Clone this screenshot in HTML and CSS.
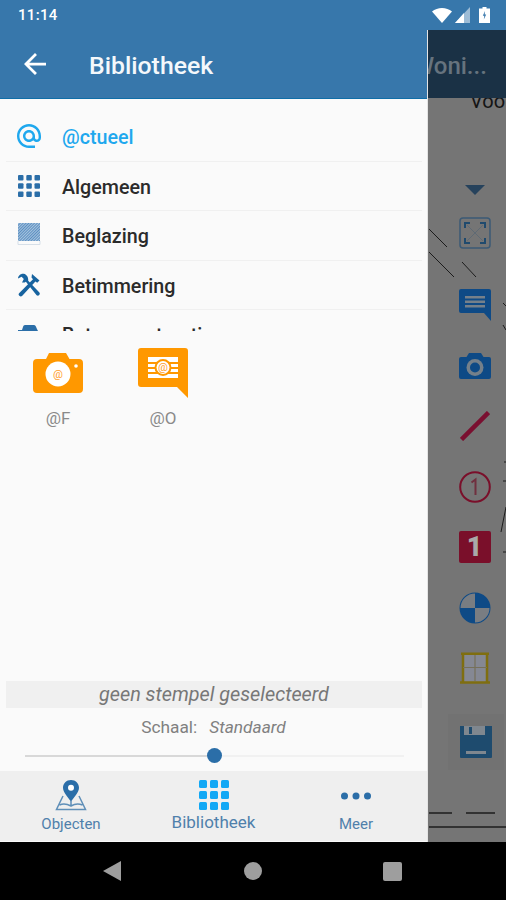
FILE: index.html
```html
<!DOCTYPE html>
<html lang="en">
<head>
  <meta charset="UTF-8" />
  <meta name="viewport" content="width=device-width, initial-scale=1.0" />
  <title>Bibliotheek</title>
  <link rel="stylesheet" href="styles.css">
</head>
<body>
  <div class="screen">
    <!-- Status bar -->
    <header class="status-bar">
      <span class="status-time">11:14</span>
      <div class="status-icons">
        <svg width="20" height="15" viewBox="0 0 20 15"><path d="M0 3.500C2.800 1.200 6.200 0 10 0s7.200 1.200 10 3.500L10 15z" fill="#fff"/></svg>
        <svg width="15" height="16" viewBox="0 0 15 16"><path d="M15 0v16H0z" fill="#9dbcd6"/><path d="M9 6v10H0z" fill="#fff"/></svg>
        <svg width="11" height="16" viewBox="0 0 11 16"><path d="M3.500 0h4v1.500H11V16H0V1.500h3.500z" fill="#fff"/><path d="M6 4 3.800 8.800H5.300L4.800 12.500 7.200 7.500H5.700z" fill="#3777ab"/></svg>
      </div>
    </header>

    <div class="content">
      <!-- Drawer -->
      <aside class="drawer">
        <div class="drawer-head">
          <svg class="back-icon" width="22" height="22" viewBox="4 4 16 16"><path d="M20 11H7.830l5.590-5.590L12 4l-8 8 8 8 1.410-1.410L7.830 13H20z" fill="#fff"/></svg>
          <h1>Bibliotheek</h1>
        </div>

        <ul class="lib-list">
          <li class="lib-row active">
            <svg width="24" height="24" viewBox="2 2 20 20"><path fill="#1fa8ee" d="M12 2C6.480 2 2 6.480 2 12s4.480 10 10 10h5v-2h-5c-4.340 0-8-3.660-8-8s3.660-8 8-8 8 3.660 8 8v1.430c0 .79-.71 1.570-1.500 1.570s-1.500-.78-1.500-1.570V12c0-2.760-2.240-5-5-5s-5 2.240-5 5 2.240 5 5 5c1.380 0 2.640-.56 3.540-1.470.65.89 1.770 1.470 2.960 1.470 1.970 0 3.500-1.600 3.500-3.570V12c0-5.520-4.480-10-10-10zm0 13c-1.660 0-3-1.340-3-3s1.340-3 3-3 3 1.340 3 3-1.340 3-3 3z"/></svg>
            <span>@ctueel</span>
          </li>
          <li class="lib-row">
            <svg width="24" height="24" viewBox="0 0 24 24" fill="#2b6ea8">
              <rect x="1" y="1" width="5.500" height="5.500" rx="1"/><rect x="9.300" y="1" width="5.500" height="5.500" rx="1"/><rect x="17.500" y="1" width="5.500" height="5.500" rx="1"/>
              <rect x="1" y="9.300" width="5.500" height="5.500" rx="1"/><rect x="9.300" y="9.300" width="5.500" height="5.500" rx="1"/><rect x="17.500" y="9.300" width="5.500" height="5.500" rx="1"/>
              <rect x="1" y="17.500" width="5.500" height="5.500" rx="1"/><rect x="9.300" y="17.500" width="5.500" height="5.500" rx="1"/><rect x="17.500" y="17.500" width="5.500" height="5.500" rx="1"/>
            </svg>
            <span>Algemeen</span>
          </li>
          <li class="lib-row">
            <svg width="24" height="24" viewBox="0 0 24 24">
              <defs><pattern id="hatch" width="2" height="2" patternUnits="userSpaceOnUse" patternTransform="rotate(45)"><rect width="2" height="2" fill="#a9c4de"/><rect width="1" height="2" fill="#5a8fc2"/></pattern></defs>
              <rect x="1" y="0" width="22" height="18" fill="url(#hatch)"/>
              <path d="M1 18v3.500h22V18" fill="none" stroke="#d6dfe8" stroke-width="1"/>
            </svg>
            <span>Beglazing</span>
          </li>
          <li class="lib-row">
            <svg width="24" height="24" viewBox="0 0 24 24" fill="#17639f">
              <path d="M6.800.8C3.800.3 1 2.600 1 5.600l3.600-1.800 2.200 2.200-1.800 3.400c1.300.4 2.800.2 3.900-.7L19.600 22.300a2 2 0 0 0 2.800-2.800L11.200 7.800c.4-3.200-1.400-6.300-4.400-7z"/>
              <path d="M15 1l7.500 6.500-2.300 2.300-1.800-1.400L5.300 22.800a2 2 0 0 1-3-2.900L16 6.300l-1.500-1.700z"/>
            </svg>
            <span>Betimmering</span>
          </li>
          <li class="lib-row">
            <svg width="24" height="24" viewBox="0 0 24 24" fill="#2b6ea8"><path d="M8 3h9c1 0 2 1 2.500 3L21 9h3v4H1V8h4l1-3c.3-1.300 1-2 2-2z"/></svg>
            <span>Betonconstructies</span>
          </li>
        </ul>

        <div class="stamps">
          <div class="stamp stamp-f">
            <svg width="50" height="40" viewBox="0 0 50 40">
              <path fill="#ff9800" d="M16 0h17l3.500 6H46a4 4 0 0 1 4 4v26a4 4 0 0 1-4 4H4a4 4 0 0 1-4-4V10a4 4 0 0 1 4-4h9z"/>
              <circle cx="25" cy="21" r="12.500" fill="#fff"/>
              <circle cx="43" cy="13" r="1.800" fill="#fff"/>
              <text x="25" y="25" class="stamp-at">@</text>
            </svg>
            <span>@F</span>
          </div>
          <div class="stamp stamp-o">
            <svg width="50" height="50" viewBox="0 0 50 50">
              <path fill="#ff9800" d="M3 0h44a3 3 0 0 1 3 3v47L39 39H3a3 3 0 0 1-3-3V3a3 3 0 0 1 3-3z"/>
              <path fill="#fff" d="M10 9h30v5H10zM10 16h30v3H10zM10 21h30v3H10zM10 26h30v4H10z"/>
              <circle cx="25" cy="19.500" r="8.500" fill="#ff9800"/>
              <circle cx="25" cy="19.500" r="6.500" fill="#fff"/>
              <text x="25" y="23" class="stamp-at">@</text>
            </svg>
            <span>@O</span>
          </div>
        </div>

        <div class="selected-stamp">geen stempel geselecteerd</div>
        <div class="scale-row"><span>Schaal:</span><em>Standaard</em></div>
        <div class="slider"><span class="slider-thumb"></span></div>

        <nav class="tab-bar">
          <a class="tab">
            <svg width="32" height="32" viewBox="0 0 32 32">
              <path fill="#2b6ea8" d="M16 1c-4.600 0-8 3.400-8 7.800 0 4.800 5 9.600 8 13.700 3-4.100 8-8.900 8-13.700C24 4.400 20.600 1 16 1z"/>
              <circle cx="16" cy="8.800" r="3" fill="#fff"/>
              <path fill="none" stroke="#5f8fb8" stroke-width="1.500" d="M8 17 1.500 30.500h29L24 17M4.500 26c3-1.500 7-1.500 11.500 1 4-2.500 8-2.500 11.500-1M16 22v5"/>
            </svg>
            <span>Objecten</span>
          </a>
          <a class="tab tab-active">
            <svg width="30" height="30" viewBox="0 0 30 30" fill="#12a8f5">
              <rect width="8" height="8" rx="1.500"/><rect x="11" width="8" height="8" rx="1.500"/><rect x="22" width="8" height="8" rx="1.500"/>
              <rect y="11" width="8" height="8" rx="1.500"/><rect x="11" y="11" width="8" height="8" rx="1.500"/><rect x="22" y="11" width="8" height="8" rx="1.500"/>
              <rect y="22" width="8" height="8" rx="1.500"/><rect x="11" y="22" width="8" height="8" rx="1.500"/><rect x="22" y="22" width="8" height="8" rx="1.500"/>
            </svg>
            <span>Bibliotheek</span>
          </a>
          <a class="tab">
            <svg width="32" height="32" viewBox="0 0 32 32" fill="#2b6ea8"><circle cx="4.500" cy="17" r="3.500"/><circle cx="16" cy="17" r="3.500"/><circle cx="27.500" cy="17" r="3.500"/></svg>
            <span>Meer</span>
          </a>
        </nav>
      </aside>

      <!-- Dimmed drawing behind the drawer -->
      <section class="canvas">
        <div class="canvas-title"><span>Woni...</span></div>
        <div class="canvas-body">
          <svg class="canvas-lines" width="78" height="744" viewBox="428 98 78 744">
            <g stroke="#1c1c1c" stroke-width="1" fill="none">
              <path d="M429 229 447 247M462 262 476 277M429 252 454 277M503 303 506 306M503 325 506 330"/>
              <path d="M504 462H506M503 481H506M506 507 501 532M503 552H506"/>
              <path d="M429 813H452M466 813H495M429 827H506" stroke-width="1.500"/>
            </g>
          </svg>
          <span class="canvas-text">Voo</span>

          <div class="tools">
            <div class="tool-toggle"></div>
            <div class="tool tool-gap">
              <svg width="32" height="32" viewBox="0 0 32 32" fill="none">
                <rect x="1" y="1" width="30" height="30" rx="3" stroke="#3b5a75" stroke-width="1.500"/>
                <path d="M8 8 24 24M24 8 8 24" stroke="#5f6a74" stroke-width="1"/>
                <path d="M6 11V6h5M21 6h5v5M6 21v5h5M26 21v5h-5" stroke="#1f4a6e" stroke-width="2"/>
              </svg>
            </div>
            <div class="tool">
              <svg width="32" height="32" viewBox="0 0 32 32">
                <path fill="#0e4a86" d="M2 0h28a2 2 0 0 1 2 2v30l-7-8H2a2 2 0 0 1-2-2V2a2 2 0 0 1 2-2z"/>
                <path fill="#75808a" d="M6 7h20v2.500H6zM6 11.500h20V14H6zM6 16h20v2.500H6z"/>
              </svg>
            </div>
            <div class="tool">
              <svg width="32" height="26" viewBox="0 0 32 26">
                <path fill="#0e4a86" d="M10 0h12l2.500 4H30a2 2 0 0 1 2 2v18a2 2 0 0 1-2 2H2a2 2 0 0 1-2-2V6a2 2 0 0 1 2-2h5.500z"/>
                <circle cx="16" cy="14.500" r="8.500" fill="#75808a"/>
                <circle cx="16" cy="14.500" r="5" fill="#0e4a86"/>
              </svg>
            </div>
            <div class="tool">
              <svg width="30" height="30" viewBox="0 0 30 30"><path d="M1.500 28.500 28.500 1.500" stroke="#7a0f30" stroke-width="4.500" fill="none"/></svg>
            </div>
            <div class="tool">
              <svg width="32" height="32" viewBox="0 0 32 32">
                <circle cx="16" cy="16" r="14.800" fill="none" stroke="#7a0f2a" stroke-width="2"/>
                <path d="M12.500 11.500l4-3V24" fill="none" stroke="#70303f" stroke-width="2"/>
              </svg>
            </div>
            <div class="tool">
              <div class="num-stamp">1</div>
            </div>
            <div class="tool">
              <svg width="32" height="32" viewBox="0 0 32 32">
                <circle cx="16" cy="16" r="15.500" fill="#0e4a86"/>
                <path d="M16 16V1.500A14.500 14.500 0 0 0 1.500 16zM16 16v14.500A14.500 14.500 0 0 0 30.500 16z" fill="#797d82"/>
              </svg>
            </div>
            <div class="tool">
              <svg width="32" height="32" viewBox="0 0 32 32">
                <rect x="3" y="2" width="26" height="28" fill="#858893"/>
                <path d="M4 1V31M28 1V31M1 30.500H31M2 1.800H30" fill="none" stroke="#7f6e10" stroke-width="2.500"/>
                <path d="M16 3V29M4 15.500H28" fill="none" stroke="#76705a" stroke-width="1.200"/>
              </svg>
            </div>
            <div class="tool tool-save">
              <svg width="32" height="32" viewBox="0 0 32 32">
                <path fill="#1e4b6e" d="M0 0h4v9h21V0h7v31a1 1 0 0 1-1 1H1a1 1 0 0 1-1-1z"/>
                <path fill="#7f878f" d="M6 25h20v3H6zM4 0h21v9H4z"/>
                <path fill="#1e4b6e" d="M9 1h3v7H9z"/>
              </svg>
            </div>
          </div>
        </div>
      </section>
    </div>

    <!-- Android navigation bar -->
    <footer class="nav-bar">
      <span class="nav-back"></span>
      <span class="nav-home"></span>
      <span class="nav-recent"></span>
    </footer>
  </div>
</body>
</html>
```

FILE: styles.css
```css
*,
*::before,
*::after {
  box-sizing: border-box;
}

body {
  margin: 0;
  font-family: Roboto, 'Noto Sans', sans-serif;
  background-color: #000;
  overflow: hidden;
}

.screen {
  display: flex;
  flex-direction: column;
  width: 506px;
  height: 900px;
}

/* status bar */
.status-bar {
  display: flex;
  align-items: center;
  justify-content: space-between;
  flex: 0 0 30px;
  padding: 0 16px 0 18px;
  background-color: #3777ab;
  color: #fff;
}

.status-time {
  font-size: 15px;
  font-weight: 500;
  letter-spacing: 0.3px;
}

.status-icons {
  display: flex;
  align-items: center;
  gap: 3px;
}

.status-icons svg:last-child {
  margin-left: 6px;
}

.content {
  display: flex;
  flex: 1;
  min-height: 0;
}

/* drawer */
.drawer {
  display: flex;
  flex-direction: column;
  flex: 0 0 428px;
  background-color: #fafafa;
  border-right: 1px solid #e4e4e4;
}

.drawer-head {
  display: flex;
  align-items: center;
  flex: 0 0 69px;
  padding-left: 24px;
  background-color: #3777ab;
  border-bottom: 1px solid #0f6ea8;
}

.drawer-head h1 {
  margin: 0 0 0 43px;
  padding-top: 3px;
  color: #f4f8fb;
  font-size: 24.8px;
  font-weight: 500;
}

.lib-list {
  flex: 0 0 232px;
  margin: 0;
  padding: 13px 0 0;
  list-style: none;
  overflow: hidden;
}

.lib-row {
  display: flex;
  align-items: center;
  height: 49.5px;
  margin: 0 5px 0 6px;
  padding-left: 11px;
  border-bottom: 1px solid #f0f0f0;
  color: #2b2b2b;
  font-size: 19.7px;
  font-weight: 500;
}

.lib-row span {
  padding-top: 3px;
}

.lib-row svg {
  flex: 0 0 auto;
  margin-right: 21px;
}

.lib-row.active {
  color: #1fa8ee;
}

/* stamps */
.stamps {
  display: flex;
  align-items: flex-start;
  flex: 1;
  min-height: 0;
  padding-left: 33px;
}

.stamp {
  display: flex;
  flex-direction: column;
  align-items: center;
  width: 50px;
  color: #8a8a8a;
  font-size: 17px;
}

.stamp span {
  margin-top: 15px;
}

.stamp-f {
  margin-top: 22px;
}

.stamp-o {
  margin: 17px 0 0 55px;
}

.stamp-o span {
  margin-top: 10px;
}

.stamp-at {
  fill: #ff9d2a;
  font-family: Roboto, sans-serif;
  font-size: 11px;
  text-anchor: middle;
}

.selected-stamp {
  height: 27px;
  margin: 0 5px 0 6px;
  background-color: #f0f0f0;
  color: #777;
  font-size: 19.8px;
  font-style: italic;
  line-height: 27px;
  text-align: center;
}

.scale-row {
  display: flex;
  justify-content: center;
  gap: 12px;
  height: 38px;
  color: #808080;
  font-size: 17.3px;
  line-height: 38px;
}

.slider {
  position: relative;
  height: 2px;
  margin: 9px 23px 0 25px;
  background: linear-gradient(to right, #d8d8d8 50%, #f1f1f1 50%);
}

.slider-thumb {
  position: absolute;
  left: 182px;
  top: -7px;
  width: 15px;
  height: 15px;
  border-radius: 50%;
  background-color: #2b6ea8;
}

/* tabs */
.tab-bar {
  display: grid;
  grid-template-columns: 142px 143px 142px;
  height: 70px;
  margin-top: 14px;
  margin-bottom: 1px;
  background-color: #efefef;
}

.tab {
  display: flex;
  flex-direction: column;
  align-items: center;
  justify-content: flex-end;
  padding-bottom: 8px;
  color: #4f80ab;
  font-size: 15px;
}

.tab svg {
  margin-bottom: 4px;
}

.tab-active {
  font-size: 17px;
  padding-bottom: 9px;
}

.tab-active svg {
  margin-bottom: 2px;
}

/* dimmed side */
.canvas {
  display: flex;
  flex-direction: column;
  flex: 1;
  background-color: #757575;
}

.canvas-title {
  flex: 0 0 68px;
  overflow: hidden;
  background-color: #1a3145;
  color: #66737e;
  font-size: 24px;
  font-weight: 500;
  line-height: 72px;
  white-space: nowrap;
}

.canvas-title span {
  display: block;
  margin-left: -15px;
}

.canvas-body {
  position: relative;
  flex: 1;
  overflow: hidden;
}

.canvas-lines {
  position: absolute;
  left: 0;
  top: 0;
}

.canvas-text {
  position: absolute;
  left: 42px;
  top: -7px;
  color: #141414;
  font-size: 20px;
  line-height: 20px;
}

.tools {
  position: relative;
  display: flex;
  flex-direction: column;
  padding: 77px 0 0 15px;
}

.tool-toggle {
  position: relative;
  height: 30px;
}

.tool-toggle::after {
  content: '';
  position: absolute;
  left: 22px;
  top: 10px;
  border-left: 10px solid transparent;
  border-right: 10px solid transparent;
  border-top: 10px solid #26425c;
}

.tool {
  display: flex;
  align-items: center;
  justify-content: center;
  height: 60.5px;
}

.tool-gap {
  height: 60px;
  margin-top: -2px;
  margin-bottom: 12px;
}

.tool-save {
  height: 56px;
  margin: 15px 2px 0 5px;
  background-color: #727272;
}

.num-stamp {
  width: 32px;
  height: 32px;
  border-radius: 2px;
  background-color: #7a0f2a;
  color: #a9a9a9;
  font-size: 27px;
  font-weight: 900;
  line-height: 32px;
  text-align: center;
}

/* android nav */
.nav-bar {
  display: flex;
  align-items: center;
  flex: 0 0 58px;
  padding-left: 103px;
  background-color: #000;
}

.nav-back {
  width: 0;
  height: 0;
  border-top: 10.5px solid transparent;
  border-bottom: 10.5px solid transparent;
  border-right: 18px solid #9e9e9e;
}

.nav-home {
  width: 18px;
  height: 18px;
  margin-left: 123px;
  border-radius: 50%;
  background-color: #9e9e9e;
}

.nav-recent {
  width: 19px;
  height: 19px;
  margin-left: 121px;
  border-radius: 2px;
  background-color: #9e9e9e;
}
```
